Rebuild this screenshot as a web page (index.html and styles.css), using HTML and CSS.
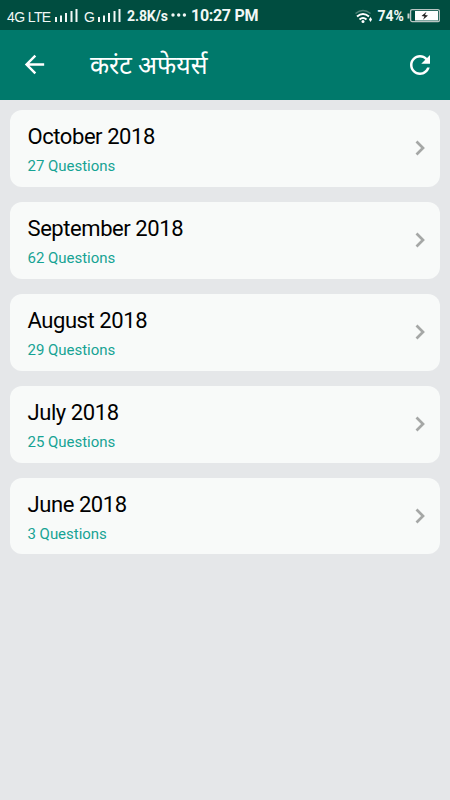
FILE: index.html
```html
<!DOCTYPE html>
<html lang="hi">
<head>
	<meta charset="utf-8">
	<title>करंट अफेयर्स</title>
	<link rel="stylesheet" href="styles.css">
</head>
<body>

	<div class="status">
		<span class="network">4G LTE</span>
		<svg class="signal" width="23" height="14" viewBox="0 0 23 14"><path d="M1 8v5M6 6.5V13M11 4v9M16.500 2v11M21.500 0v13"/></svg>
		<span class="network second">G</span>
		<svg class="signal" width="23" height="14" viewBox="0 0 23 14"><path d="M1 8v5M6 6.5V13M11 4v9M16.500 2v11M21.500 0v13"/></svg>
		<span class="speed">2.8K/s</span>
		<svg class="dots" width="16" height="4" viewBox="0 0 16 4"><circle cx="2" cy="2" r="1.700"/><circle cx="7.700" cy="2" r="1.700"/><circle cx="13.400" cy="2" r="1.700"/></svg>
		<span class="clock">10:27 PM</span>
		<div class="right">
			<svg class="wifi" width="20" height="15" viewBox="0 0 20 15">
				<path class="faint" d="M1.500 4.500Q9-1.500 16.500 4.500"/>
				<path d="M3 7.500Q9 2.500 15 7.500M5.500 10.500Q9 7.500 12.500 10.500"/>
				<circle cx="9" cy="12.500" r="1.500"/>
				<path class="arrow" d="M16.500 8l1.500 2.500-1.500 2.500-1.500-2.500z"/>
			</svg>
			<span class="percent">74%</span>
			<svg class="battery" width="33" height="15" viewBox="0 0 33 15">
				<path class="cap" d="M1.500 5.500v5"/>
				<rect class="case" x="3.600" y="1.600" width="28.800" height="12" rx="1.500"/>
				<rect class="level" x="8" y="3" width="23" height="9.500"/>
				<path class="bolt" d="M19.500 3.800l-5 4.200 3 .5-1.500 3.200 5-4.200-3-.5z"/>
			</svg>
		</div>
	</div>

	<div class="header">
		<svg class="back" width="29" height="29" viewBox="0 0 24 24"><path d="M20 11H7.830l5.590-5.590L12 4l-8 8 8 8 1.410-1.410L7.830 13H20v-2z"/></svg>
		<h1>करंट अफेयर्स</h1>
		<svg class="refresh" width="30" height="30" viewBox="0 0 24 24"><path d="M17.650 6.350C16.200 4.900 14.210 4 12 4c-4.420 0-7.990 3.580-7.990 8s3.570 8 7.990 8c3.730 0 6.840-2.550 7.730-6h-2.080c-.82 2.330-3.040 4-5.650 4-3.310 0-6-2.690-6-6s2.690-6 6-6c1.660 0 3.140.69 4.220 1.780L13 11h7V4l-2.350 2.350z"/></svg>
	</div>

	<div class="list">
		<div class="item">
			<div class="text">
				<h2>October 2018</h2>
				<p>27 Questions</p>
			</div>
			<svg class="chevron" width="12" height="18" viewBox="0 0 12 18"><path d="M2.500 2.500L9 9l-6.500 6.500"/></svg>
		</div>
		<div class="item">
			<div class="text">
				<h2>September 2018</h2>
				<p>62 Questions</p>
			</div>
			<svg class="chevron" width="12" height="18" viewBox="0 0 12 18"><path d="M2.500 2.500L9 9l-6.500 6.500"/></svg>
		</div>
		<div class="item">
			<div class="text">
				<h2>August 2018</h2>
				<p>29 Questions</p>
			</div>
			<svg class="chevron" width="12" height="18" viewBox="0 0 12 18"><path d="M2.500 2.500L9 9l-6.500 6.500"/></svg>
		</div>
		<div class="item">
			<div class="text">
				<h2>July 2018</h2>
				<p>25 Questions</p>
			</div>
			<svg class="chevron" width="12" height="18" viewBox="0 0 12 18"><path d="M2.500 2.500L9 9l-6.500 6.500"/></svg>
		</div>
		<div class="item">
			<div class="text">
				<h2>June 2018</h2>
				<p>3 Questions</p>
			</div>
			<svg class="chevron" width="12" height="18" viewBox="0 0 12 18"><path d="M2.500 2.500L9 9l-6.500 6.500"/></svg>
		</div>
	</div>

</body>
</html>
```

FILE: styles.css
```css
* {
	box-sizing: border-box;
}
body {
	margin: 0;
	min-height: 800px;
	background-color: #e5e7e9;
	font-family: Roboto, "Noto Sans", sans-serif;
}
h1, h2, p {
	margin: 0;
	font-weight: normal;
	white-space: nowrap;
}
svg {
	display: block;
	flex: none;
}

/* status bar */
.status {
	display: flex;
	align-items: center;
	height: 30px;
	padding: 2px 10px 0 7px;
	background-color: #004d40;
	color: #f2f8f6;
	font-size: 14px;
	line-height: 28px;
	white-space: nowrap;
}
.network {
	width: 44px;
	margin-right: 4px;
	padding-top: 1px;
	font-family: "Liberation Sans", sans-serif;
	letter-spacing: -0.6px;
}
.network.second {
	width: 11px;
	margin-left: 6px;
	margin-right: 3px;
}
.signal {
	margin-top: -1px;
	fill: none;
	stroke: #f2f8f6;
	stroke-width: 2;
}
.speed {
	width: 42px;
	margin-left: 6px;
	font-weight: bold;
	letter-spacing: -0.1px;
}
.dots {
	margin-left: 2px;
	margin-top: -2px;
	fill: #f2f8f6;
}
.clock {
	margin-left: 4px;
	font-size: 16px;
	font-weight: bold;
	letter-spacing: -0.3px;
}
.right {
	display: flex;
	align-items: center;
	margin-left: auto;
}
.wifi {
	fill: none;
	stroke: #ffffff;
	stroke-width: 2;
}
.wifi circle, .wifi .arrow {
	fill: #ffffff;
	stroke: none;
}
.wifi .faint {
	stroke: #4d8277;
	stroke-width: 1.5;
}
.percent {
	width: 27px;
	margin-left: 3.500px;
	font-weight: bold;
}
.battery {
	margin-left: 2.500px;
	margin-top: -2px;
}
.battery .cap {
	stroke: #c5d2cf;
	stroke-width: 2;
}
.battery .case {
	fill: none;
	stroke: #b9c5c2;
	stroke-width: 1.3;
}
.battery .level {
	fill: #ffffff;
}
.battery .bolt {
	fill: #222222;
}

/* title bar */
.header {
	display: flex;
	align-items: center;
	height: 70px;
	padding: 0 15px 0 20px;
	background-color: #00796b;
	color: #ffffff;
}
.header svg {
	fill: #ffffff;
}
.header .back {
	margin-bottom: 1px;
}
.header h1 {
	margin-left: 41px;
	padding-top: 2px;
	font-size: 24.900px;
	line-height: 40px;
}
.refresh {
	margin-left: auto;
}

/* months */
.list {
	display: flex;
	flex-direction: column;
	gap: 15px;
	padding: 10px;
}
.item {
	display: flex;
	align-items: center;
	justify-content: space-between;
	height: 76.900px;
	padding: 0 14.500px 0 17.500px;
	border-radius: 12px;
	background-color: #f8faf9;
}
.text {
	padding-top: 0.400px;
}
.item h2 {
	padding-top: 1px;
	color: #000000;
	font-size: 22px;
	line-height: 30px;
	letter-spacing: -0.43px;
}
.item p {
	color: #16a394;
	font-size: 15px;
	line-height: 20px;
	margin-top: 4px;
	letter-spacing: -0.03px;
}
.chevron {
	fill: none;
	stroke: #a5a7a6;
	stroke-width: 2.700;
}
```
